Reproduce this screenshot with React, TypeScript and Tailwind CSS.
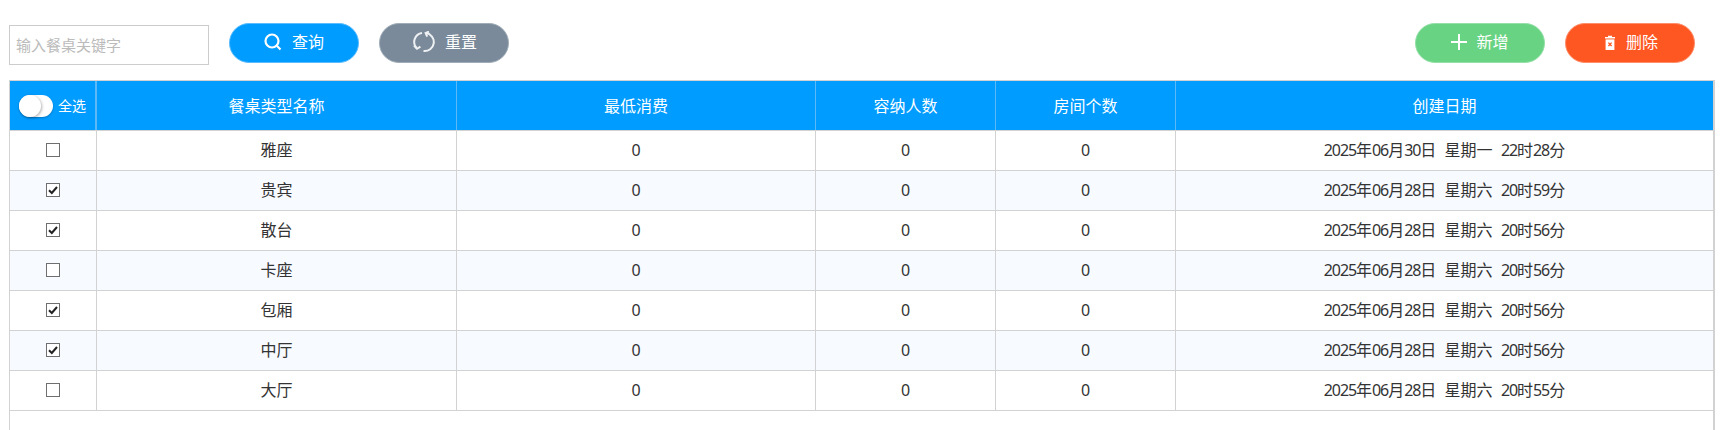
const rows = [
  { name: "雅座", checked: false, date: "2025年06月30日  星期一  22时28分" },
  { name: "贵宾", checked: true, date: "2025年06月28日  星期六  20时59分" },
  { name: "散台", checked: true, date: "2025年06月28日  星期六  20时56分" },
  { name: "卡座", checked: false, date: "2025年06月28日  星期六  20时56分" },
  { name: "包厢", checked: true, date: "2025年06月28日  星期六  20时56分" },
  { name: "中厅", checked: true, date: "2025年06月28日  星期六  20时56分" },
  { name: "大厅", checked: false, date: "2025年06月28日  星期六  20时55分" },
];

const cols = "grid grid-cols-[87px_360px_359px_180px_180px_1fr]";

function Checkbox({ checked }: { checked: boolean }) {
  return (
    <span className="w-[14px] h-[14px] border border-[#6f6f6f] bg-white flex items-center justify-center">
      {checked && (
        <svg width="10" height="10" viewBox="0 0 10 10">
          <path d="M1 5.2 L3.8 8 L9 2" fill="none" stroke="#222" strokeWidth="2" />
        </svg>
      )}
    </span>
  );
}

// digits in the reference are narrower than the installed fonts
function DateText({ value }: { value: string }) {
  return (
    <>
      {value.split(/(\d+)/).map((part, i) =>
        /\d/.test(part) ? (
          <span key={i} className="tracking-[-1.1px]">{part}</span>
        ) : (
          <span key={i}>{part}</span>
        )
      )}
    </>
  );
}

export default function App() {
  return (
    <div className="h-[430px] overflow-hidden bg-white text-[16px] text-[#333] font-['Noto_Sans','Noto_Sans_CJK_SC',sans-serif]">
      {/* Toolbar */}
      <div className="flex items-start pl-[9px] pr-[28px] pt-[23px] h-[80px]">
        <input
          placeholder="输入餐桌关键字"
          className="w-[200px] h-[40px] mt-[2px] border border-[#ccc] px-[6px] text-[15px] placeholder:text-[#bbb] outline-none"
        />
        <button className="ml-[20px] w-[130px] h-[40px] pb-[2px] rounded-full bg-[#009cff] border border-[#5cbcff] text-white flex items-center justify-center gap-[10px]">
          <svg width="18" height="18" viewBox="0 0 18 18" fill="none" stroke="#fff" strokeWidth="2.2">
            <circle cx="8" cy="8" r="6.5" />
            <path d="M12.8 12.8 L16.5 16.5" />
          </svg>
          <span>查询</span>
        </button>
        <button className="ml-[20px] w-[130px] h-[40px] pb-[2px] pl-[2px] rounded-full bg-[#7a8a9a] border border-[#a0adb8] text-white flex items-center justify-center gap-[10px]">
          <svg width="22" height="22" viewBox="0 0 22 22" fill="none" stroke="#eef1f3" strokeWidth="2">
            <path d="M9 2 A9 9 0 0 0 3.6 17" />
            <path d="M1 14.6 L4 17.8 L7.4 15.6" />
            <path d="M13 2.1 A9 9 0 0 1 10.5 20" />
            <path d="M16 0.6 L12.6 2 L14.2 5.6" />
          </svg>
          <span>重置</span>
        </button>
        <button className="ml-auto w-[130px] h-[40px] pb-[2px] rounded-full bg-[#68d382] border border-[#95e0a8] text-white flex items-center justify-center gap-[9px]">
          <svg width="16" height="16" viewBox="0 0 16 16" stroke="#fff" strokeWidth="2">
            <path d="M8 0 V16 M0 8 H16" />
          </svg>
          <span>新增</span>
        </button>
        <button className="ml-[20px] w-[130px] h-[40px] pb-[2px] pl-[3px] rounded-full bg-[#ff5722] border border-[#ff8f6b] text-white flex items-center justify-center gap-[11px]">
          <svg width="10" height="15" viewBox="0 0 10 15">
            <path d="M0 2H3V0.8H7V2H10V3.4H0Z" fill="#fff" />
            <path d="M0.6 4.4H9.4V15H0.6Z" fill="#fff" />
            <path d="M3.4 7.6L6.6 11M6.6 7.6L3.4 11" stroke="#ff5722" strokeWidth="1.3" />
          </svg>
          <span>删除</span>
        </button>
      </div>

      {/* Table */}
      <div className="ml-[9px] mr-[8px] h-[350px] border-l border-r-2 border-t border-[#d2d2d2]">
        <div className={`${cols} h-[50px] bg-[#009cff] text-white border-b border-[#d2d2d2]`}>
          <div className="flex items-center justify-center gap-[5px] border-r-2 border-[#5cb9f5] text-[14px]">
            <span className="relative w-[34px] h-[22px] rounded-full bg-white shadow-[0_1px_2px_rgba(0,0,0,0.25)]">
              <span className="absolute left-0 top-0 w-[22px] h-[22px] rounded-full bg-white shadow-[1px_1px_3px_rgba(0,0,0,0.3)]" />
            </span>
            <span>全选</span>
          </div>
          {["餐桌类型名称", "最低消费", "容纳人数", "房间个数"].map((t) => (
            <div key={t} className="flex items-center justify-center border-r border-[#5cb9f5]">
              {t}
            </div>
          ))}
          <div className="flex items-center justify-center">创建日期</div>
        </div>
        {rows.map((r, i) => (
          <div key={r.name} className={`${cols} h-[40px] border-b border-[#d2d2d2] ${i % 2 === 1 ? "bg-[#f7faff]" : "bg-white"}`}>
            <div className="flex items-center justify-center pb-[2px] border-r border-[#d2d2d2]">
              <Checkbox checked={r.checked} />
            </div>
            <div className="flex items-center justify-center pb-[2px] border-r border-[#d2d2d2]">{r.name}</div>
            <div className="flex items-center justify-center pb-[2px] border-r border-[#d2d2d2]">0</div>
            <div className="flex items-center justify-center pb-[2px] border-r border-[#d2d2d2]">0</div>
            <div className="flex items-center justify-center pb-[2px] border-r border-[#d2d2d2]">0</div>
            <div className="whitespace-pre flex items-center justify-center pb-[2px]">
              <span><DateText value={r.date} /></span>
            </div>
          </div>
        ))}
      </div>
    </div>
  );
}
